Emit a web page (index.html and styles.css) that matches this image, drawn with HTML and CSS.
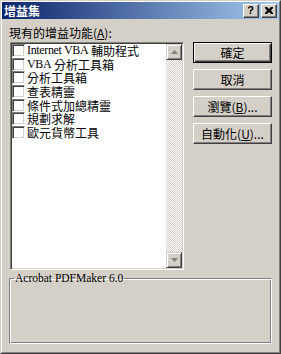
FILE: index.html
```html
<!DOCTYPE html>
<html lang="zh-Hant">
<head>
<meta charset="utf-8">
<title>增益集</title>
<link rel="stylesheet" href="styles.css">
</head>
<body>
<div class="window">
  <div class="frame">
    <div class="titlebar">
      <span class="title">增益集</span>
      <div class="tb-buttons">
        <div class="tb-btn help">?</div>
        <div class="tb-btn close">
          <svg width="8" height="7" viewBox="0 0 8 7"><path d="M0 0h2l2 2 2-2h2v1L6 3.5 8 6v1H6L4 5 2 7H0V6l2-2.5L0 1z" fill="#000"/></svg>
        </div>
      </div>
    </div>
    <div class="content">
      <div class="main">
        <div class="left">
          <div class="label">現有的增益功能(<u>A</u>):</div>
          <div class="listbox">
            <ul class="items">
              <li><span class="cb"></span><span class="lat">Internet VBA&nbsp;</span>輔助程式</li>
              <li><span class="cb"></span><span class="lat">VBA&nbsp;</span>分析工具箱</li>
              <li><span class="cb"></span>分析工具箱</li>
              <li><span class="cb"></span>查表精靈</li>
              <li><span class="cb"></span>條件式加總精靈</li>
              <li><span class="cb"></span>規劃求解</li>
              <li><span class="cb"></span>歐元貨幣工具</li>
            </ul>
            <div class="scrollbar">
              <div class="sb-btn">
                <svg width="7" height="4" viewBox="0 0 7 4"><path d="M3.5 0L7 4H0z" fill="#808080"/></svg>
              </div>
              <div class="sb-track"></div>
              <div class="sb-btn">
                <svg width="7" height="4" viewBox="0 0 7 4"><path d="M0 0h7L3.5 4z" fill="#808080"/></svg>
              </div>
            </div>
          </div>
        </div>
        <div class="buttons">
          <div class="btn default"><span>確定</span></div>
          <div class="btn"><span>取消</span></div>
          <div class="btn"><span>瀏覽(<u>B</u>)...</span></div>
          <div class="btn"><span>自動化(<u>U</u>)...</span></div>
        </div>
      </div>
      <fieldset class="group">
        <legend><span class="lat2">Acrobat PDFMaker 6.0</span></legend>
      </fieldset>
    </div>
  </div>
</div>
</body>
</html>
```

FILE: styles.css
```css
* { box-sizing: border-box; }

html, body {
  margin: 0;
  padding: 0;
  background: #d4d0c8;
}

body {
  font-family: "Liberation Serif", "Noto Sans CJK TC", serif;
  font-size: 12px;
  color: #000;
}

.window {
  width: 281px;
  height: 354px;
  border: 1px solid;
  border-color: #d4d0c8 #404040 #404040 #d4d0c8;
  background: #d4d0c8;
}

.frame {
  height: 100%;
  border: 1px solid;
  border-color: #ffffff #808080 #808080 #ffffff;
  display: flex;
  flex-direction: column;
}

.titlebar {
  height: 17px;
  background: linear-gradient(to right, #0a246a, #a6caf0);
  display: flex;
  align-items: center;
  justify-content: space-between;
  padding: 0 2px 0 2px;
}

.title {
  color: #fff;
  font-family: "Noto Sans CJK TC", sans-serif;
  font-weight: bold;
  font-size: 12px;
  line-height: 14px;
}

.tb-buttons {
  display: flex;
  gap: 2px;
}

.tb-btn {
  width: 16px;
  height: 14px;
  background: #d4d0c8;
  border: 1px solid;
  border-color: #ffffff #404040 #404040 #ffffff;
  box-shadow: inset -1px -1px 0 #808080;
  display: flex;
  align-items: center;
  justify-content: center;
}

.tb-btn.help {
  font-family: "Liberation Sans", sans-serif;
  font-weight: bold;
  font-size: 11px;
  line-height: 11px;
  padding-right: 1px;
}

.content {
  flex: 1;
  padding: 7px 7px 0 7px;
  display: flex;
  flex-direction: column;
}

.main {
  display: flex;
  gap: 9px;
}

.left {
  display: flex;
  flex-direction: column;
}

.label {
  height: 14px;
  line-height: 14px;
  white-space: nowrap;
  font-family: "Noto Sans CJK TC", sans-serif;
}

.listbox {
  margin: 2px 0 0 1px;
  width: 174px;
  height: 228px;
  border: 1px solid;
  border-color: #808080 #ffffff #ffffff #808080;
  box-shadow: inset 1px 1px 0 #404040, inset -1px -1px 0 #d4d0c8;
  background: #fff;
  display: flex;
  padding: 1px;
}

.items {
  list-style: none;
  margin: 0;
  padding: 0;
  flex: 1;
}

.items li {
  height: 13.6px;
  display: flex;
  align-items: center;
  white-space: nowrap;
  font-family: "Noto Sans CJK TC", sans-serif;
  line-height: 13px;
}

.lat {
  font-family: "Liberation Serif", serif;
  font-size: 12px;
  letter-spacing: -0.35px;
}

.cb {
  width: 13px;
  height: 13px;
  flex: none;
  border: 1px solid;
  border-color: #808080 #ffffff #ffffff #808080;
  box-shadow: inset 1px 1px 0 #404040, inset -1px -1px 0 #d4d0c8;
  background: #fff;
  margin-right: 2px;
}

.scrollbar {
  width: 16px;
  display: flex;
  flex-direction: column;
  background-color: #fff;
  background-image: conic-gradient(#d4d0c8 25%, #fff 0 50%, #d4d0c8 0 75%, #fff 0);
  background-size: 2px 2px;
}

.sb-btn {
  width: 16px;
  height: 16px;
  background: #d4d0c8;
  border: 1px solid;
  border-color: #d4d0c8 #404040 #404040 #d4d0c8;
  box-shadow: inset 1px 1px 0 #fff, inset -1px -1px 0 #808080;
  display: flex;
  align-items: center;
  justify-content: center;
}

.sb-track {
  flex: 1;
}

.buttons {
  margin-top: 16px;
  width: 79px;
  display: flex;
  flex-direction: column;
  gap: 6px;
}

.btn {
  height: 21px;
  background: #d4d0c8;
  border: 1px solid;
  border-color: #ffffff #404040 #404040 #ffffff;
  box-shadow: inset -1px -1px 0 #808080;
  display: flex;
  align-items: center;
  justify-content: center;
  font-family: "Noto Sans CJK TC", sans-serif;
  line-height: 14px;
  white-space: nowrap;
}

.btn.default {
  border: 1px solid #000;
  box-shadow: inset 1px 1px 0 #fff, inset -1px -1px 0 #404040, inset -2px -2px 0 #808080;
}

.group {
  margin: 2px 0 0 0;
  width: 263px;
  height: 72px;
  padding: 0;
  border: 1px solid;
  border-color: #808080 #ffffff #ffffff #808080;
  box-shadow: inset 1px 1px 0 #ffffff, inset -1px -1px 0 #808080;
  border-radius: 0;
}

.group legend {
  margin-left: 4px;
  padding: 0 1px;
  line-height: 12px;
}

.lat2 {
  font-family: "Liberation Serif", serif;
  font-size: 11.5px;
}
```
